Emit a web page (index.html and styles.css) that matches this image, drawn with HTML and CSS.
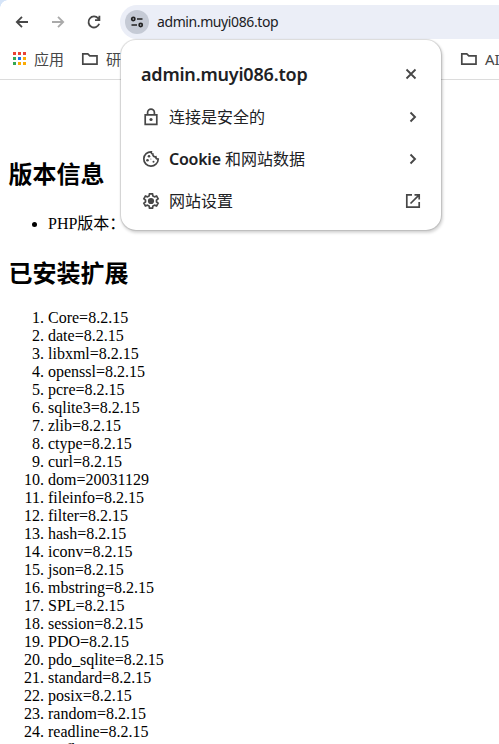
FILE: index.html
```html
<!DOCTYPE html>
<html lang="zh-CN">
<head>
<meta charset="utf-8">
<title>admin.muyi086.top</title>
<link rel="stylesheet" href="styles.css">
</head>
<body>
<div class="corner"></div>
<header class="browser">
  <div class="toolbar">
    <svg class="nav" viewBox="0 0 16 16"><path d="M14 8H3M8 2.8L2.8 8L8 13.2"/></svg>
    <svg class="nav muted" viewBox="0 0 16 16"><path d="M2 8H13M8 2.8L13.2 8L8 13.2"/></svg>
    <svg class="nav" viewBox="0 0 16 16"><path d="M13.2 9.8A5.5 5.5 0 1 1 12.2 4.4L13.4 6M13.4 1.8V6.2H9"/></svg>
    <div class="address">
      <span class="site-button"><svg viewBox="0 0 14 12"><circle cx="3.3" cy="3" r="1.6"/><path d="M7 3H12.5M1.5 9H7"/><circle cx="10.7" cy="9" r="1.6"/></svg></span>
      <span class="url">admin.muyi086.top</span>
    </div>
  </div>
  <nav class="bookmarks">
    <span class="apps"><i class="r"></i><i class="r"></i><i class="r"></i><i class="g"></i><i class="b"></i><i class="y"></i><i class="g"></i><i class="y"></i><i class="y"></i></span>
    <span class="label">应用</span>
    <svg class="folder" viewBox="0 0 18 14"><path d="M1.8 1.8H6.8L8.8 3.8H16V12.2H1.8Z"/></svg>
    <span class="label">研</span>
    <svg class="folder last" viewBox="0 0 18 14"><path d="M1.8 1.8H6.8L8.8 3.8H16V12.2H1.8Z"/></svg>
    <span class="label">AI</span>
  </nav>
</header>
<section class="popup">
  <div class="popup-head">
    <h1>admin.muyi086.top</h1>
    <svg class="close" viewBox="0 0 12 12"><path d="M1.5 1.5L10.5 10.5M10.5 1.5L1.5 10.5"/></svg>
  </div>
  <div class="row">
    <svg class="icon" viewBox="0 0 18 18"><path d="M3.2 6.8H14.8V16.3H3.2ZM5.6 6.8V4.5A3.4 3.4 0 0 1 12.4 4.5V6.8"/><circle class="solid" cx="9" cy="11.5" r="1.6"/></svg>
    <span>连接是安全的</span>
    <svg class="chevron" viewBox="0 0 12 12"><path d="M3.5 1.5L8 6L3.5 10.5"/></svg>
  </div>
  <div class="row">
    <svg class="icon" viewBox="0 0 18 18"><path d="M9.3 1.8A7.2 7.2 0 1 0 16.2 9.2C14.8 9.2 13.8 8.2 13.8 6.8C11.8 7 10.6 5.8 10.9 4.2C9.7 4 9 3 9.3 1.8Z"/><circle class="solid" cx="7" cy="6.2" r="1.3"/><circle class="solid" cx="5.5" cy="10.2" r="1.3"/><circle class="solid" cx="11.5" cy="11.8" r="1"/><circle class="solid" cx="8.9" cy="9" r=".5"/></svg>
    <span class="cookie"><b>Cookie</b> 和网站数据</span>
    <svg class="chevron" viewBox="0 0 12 12"><path d="M3.5 1.5L8 6L3.5 10.5"/></svg>
  </div>
  <div class="row">
    <svg class="icon" viewBox="0 0 18 18"><path d="M7.5 1.8H10.5L10.9 3.9L12.6 4.9L14.6 4.1L16.1 6.7L14.5 8.1V9.9L16.1 11.3L14.6 13.9L12.6 13.1L10.9 14.1L10.5 16.2H7.5L7.1 14.1L5.4 13.1L3.4 13.9L1.9 11.3L3.5 9.9V8.1L1.9 6.7L3.4 4.1L5.4 4.9L7.1 3.9Z"/><circle class="solid" cx="9" cy="9" r="3.1"/></svg>
    <span>网站设置</span>
    <svg class="external" viewBox="0 0 16 16"><path d="M7 1.8H1.8V14.2H14.2V9M9.5 1.8H14.2V6.5M14.2 1.8L5.5 10.5"/></svg>
  </div>
</section>
<main>
  <h2>版本信息</h2>
  <ul><li>PHP版本：</li></ul>
  <h2>已安装扩展</h2>
  <ol>
    <li>Core=8.2.15</li><li>date=8.2.15</li><li>libxml=8.2.15</li><li>openssl=8.2.15</li>
    <li>pcre=8.2.15</li><li>sqlite3=8.2.15</li><li>zlib=8.2.15</li><li>ctype=8.2.15</li>
    <li>curl=8.2.15</li><li>dom=20031129</li><li>fileinfo=8.2.15</li><li>filter=8.2.15</li>
    <li>hash=8.2.15</li><li>iconv=8.2.15</li><li>json=8.2.15</li><li>mbstring=8.2.15</li>
    <li>SPL=8.2.15</li><li>session=8.2.15</li><li>PDO=8.2.15</li><li>pdo_sqlite=8.2.15</li>
    <li>standard=8.2.15</li><li>posix=8.2.15</li><li>random=8.2.15</li><li>readline=8.2.15</li>
    <li>Reflection=8.2.15</li>
  </ol>
</main>
</body>
</html>
```
FILE: styles.css
```css
* { box-sizing: border-box; }
html { height: 744px; overflow: hidden; }
body { margin: 0; height: 744px; overflow: hidden; position: relative; background: #fff; color: #000; font-family: "Liberation Serif", "Noto Sans CJK SC", serif; font-size: 16px; line-height: 18px; }
svg { fill: none; stroke: #474747; stroke-width: 1.7; flex: none; display: block; }
.solid { fill: #474747; stroke: none; }
.corner { position: absolute; left: 0; top: 0; width: 8px; height: 8px; background: radial-gradient(circle at 8px 8px, transparent 7.5px, #d5e4f8 8px); }
.browser { height: 80px; border-bottom: 1px solid #dcdcdc; font-family: "Noto Sans", "Noto Sans CJK SC", sans-serif; }
.toolbar { display: flex; align-items: center; height: 39px; padding: 5px 0 0 14px; }
.nav { width: 16px; height: 16px; margin-right: 20px; stroke-width: 1.8; }
.nav.muted { stroke: #aaa; }
.address { display: flex; align-items: center; flex: 1; height: 34px; margin-left: -2px; padding-left: 5px; border-radius: 17px 0 0 17px; background: #ebeef7; }
.site-button { display: grid; place-items: center; width: 24px; height: 24px; border-radius: 50%; background: #c5cad5; }
.site-button svg { width: 14px; height: 12px; stroke: #222; }
.url { margin-left: 8px; color: #202124; font-size: 14px; letter-spacing: -0.4px; }
.bookmarks { display: flex; align-items: center; height: 39px; padding-left: 13px; white-space: nowrap; color: #474747; }
.apps { display: grid; grid-template-columns: repeat(3, 3px); gap: 2px; width: 13px; flex: none; }
.apps i { height: 3px; }
.r { background: #ea4335; }
.g { background: #34a853; }
.b { background: #1a73e8; }
.y { background: #fbab05; }
.label { margin-left: 7px; font-size: 15px; }
.apps + .label { margin-left: 8px; }
.folder { width: 18px; height: 14px; margin-left: 17px; }
.folder.last { margin-left: 339px; }
.popup { position: absolute; left: 121px; top: 40px; width: 320px; height: 190px; padding: 13px 20px 0; border-radius: 15px; background: #fff; box-shadow: 0 0 1px 1px rgba(0,0,0,.13), 1px 2px 3px 1px rgba(0,0,0,.16); color: #202124; font: 16px/24px "Noto Sans", "Noto Sans CJK SC", sans-serif; }
.popup-head { display: flex; align-items: center; justify-content: space-between; height: 42px; margin-bottom: 1px; padding-right: 4px; }
.popup h1 { margin: 0; font-size: 18px; font-weight: 600; line-height: 24px; letter-spacing: -0.2px; }
.close { width: 12px; height: 12px; stroke-width: 1.8; }
.row { display: flex; align-items: center; height: 42px; }
.row .icon { width: 18px; height: 18px; margin: 0 9px 0 1px; }
.row span { flex: 1; white-space: nowrap; }
.row b { font-weight: 600; letter-spacing: -0.25px; }
.chevron { width: 12px; height: 12px; margin-right: 2px; stroke-width: 1.9; }
.external { width: 16px; height: 16px; }
main { padding: 78px 8px 0; }
h2 { margin: 0; padding-left: 0.5px; font-size: 24px; font-weight: 700; line-height: 35px; }
ul { margin: 19px 0 21px; padding-left: 40px; line-height: 24px; }
ol { margin: 17px 0 0; padding-left: 40px; }
```
